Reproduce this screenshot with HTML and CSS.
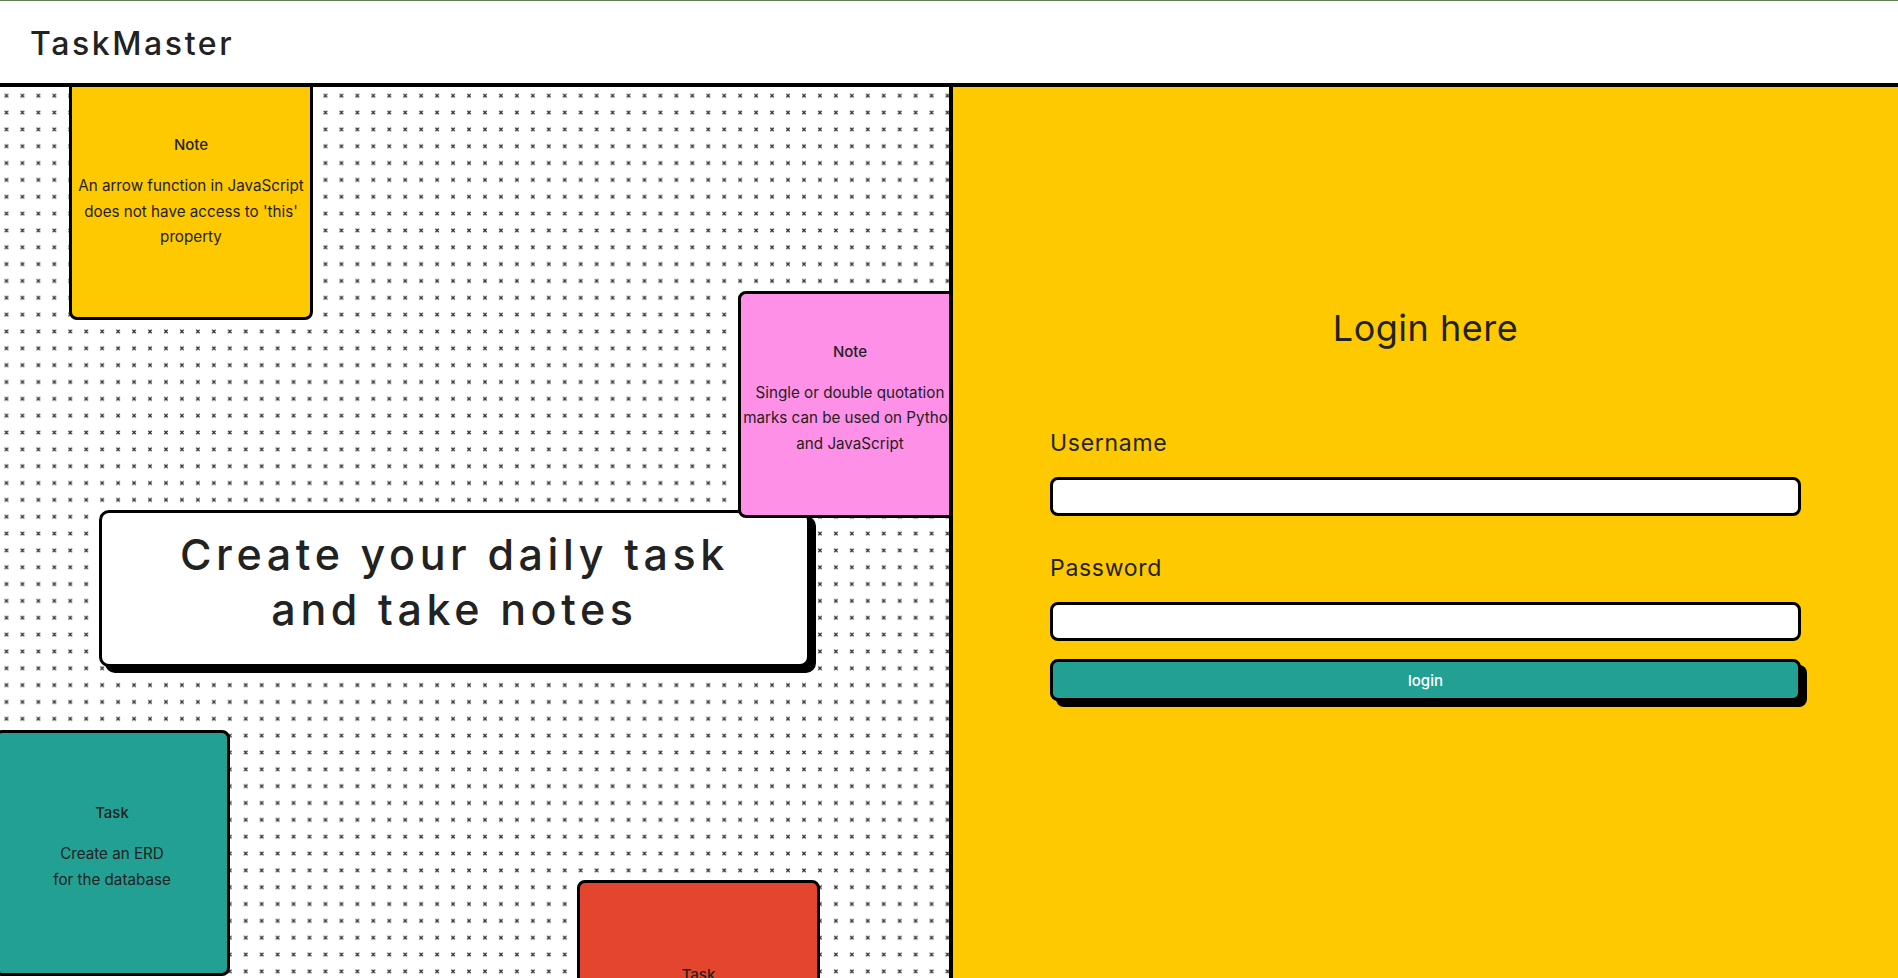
FILE: index.html
```html
<!DOCTYPE html>
<html lang="en">
<head>
<meta charset="utf-8">
<title>TaskMaster</title>
<link rel="stylesheet" href="styles.css">
</head>
<body>
<header class="topbar">
  <h1 class="brand">TaskMaster</h1>
</header>
<main class="layout">
  <section class="board">
    <svg class="dots" aria-hidden="true">
      <defs>
        <pattern id="xmark" width="15.95" height="16.84" patternUnits="userSpaceOnUse" x="-1.5" y="0.3">
          <path d="M6.3 6.75 L9.65 10.1 M9.65 6.75 L6.3 10.1" stroke="#333" stroke-width="1.3" fill="none"/>
        </pattern>
      </defs>
      <rect width="100%" height="100%" fill="url(#xmark)"/>
    </svg>

    <div class="card yellow card-arrow">
      <h3 class="card-title">Note</h3>
      <p class="card-text">An arrow function in JavaScript does not have access to 'this' property</p>
    </div>

    <div class="card teal card-erd">
      <h3 class="card-title">Task</h3>
      <p class="card-text">Create an ERD<br>for the database</p>
    </div>

    <div class="card red card-login">
      <h3 class="card-title">Task</h3>
      <p class="card-text">Build the login page</p>
    </div>

    <div class="hero">
      <h2 class="hero-title">Create your daily task<br>and take notes</h2>
    </div>

    <div class="card pink card-quotes">
      <h3 class="card-title">Note</h3>
      <p class="card-text">Single or double quotation marks can be used on Python and JavaScript</p>
    </div>
  </section>

  <section class="login">
    <h2 class="login-title">Login here</h2>
    <form class="login-form">
      <label class="field-label" for="username">Username</label>
      <input class="field-input" id="username" type="text">
      <label class="field-label second" for="password">Password</label>
      <input class="field-input" id="password" type="password">
      <button class="login-btn" type="button">login</button>
    </form>
  </section>
</main>
</body>
</html>
```

FILE: styles.css
```css
* { box-sizing: border-box; }

html, body {
  margin: 0;
  height: 100%;
}

body {
  font-family: Inter, "Liberation Sans", sans-serif;
  color: #1f1f1f;
  overflow: hidden;
  background: #fff;
}

.topbar {
  height: 87px;
  border-top: 1px solid #5f7f55;
  border-bottom: 4px solid #000;
  display: flex;
  align-items: center;
  padding-left: 30px;
  padding-top: 3px;
  background: #fff;
}

.brand {
  margin: 0;
  font-size: 32px;
  font-weight: 500;
  letter-spacing: 2.6px;
  color: #222;
}

.layout {
  display: grid;
  grid-template-columns: 953px 1fr;
  height: calc(100vh - 87px);
}

.board {
  position: relative;
  overflow: hidden;
  border-right: 4px solid #000;
  background: #fff;
}

.dots {
  position: absolute;
  inset: 0;
  width: 100%;
  height: 100%;
}

.card {
  position: absolute;
  border: 3px solid #000;
  border-radius: 8px;
  display: flex;
  flex-direction: column;
  align-items: center;
  justify-content: center;
  text-align: center;
  padding: 0 0 14px;
  color: #222;
}

.card-title {
  margin: 0 0 16px;
  font-size: 15px;
  line-height: 25px;
  font-weight: 500;
}

.card-text {
  margin: 0;
  font-size: 15.2px;
  line-height: 25.5px;
  font-weight: 400;
}

.yellow { background: #ffc900; }
.pink { background: #ff90e8; }
.teal { background: #23a094; }
.red { background: #e3452f; }

.card-arrow { left: 69px; top: -11px; width: 244px; height: 244px; }
.card-quotes { left: 738px; top: 204px; width: 224px; height: 227px; z-index: 2; }
.card-erd { left: -6px; top: 643px; width: 236px; height: 246px; }
.card-login { left: 577px; top: 793px; width: 243px; height: 244px; }

.hero {
  position: absolute;
  left: 99px;
  top: 423px;
  width: 711px;
  height: 157px;
  background: #fff;
  border: 3px solid #000;
  border-radius: 10px;
  box-shadow: 6px 6px 0 #000;
  display: flex;
  align-items: center;
  justify-content: center;
  padding-bottom: 13px;
  z-index: 1;
}

.hero-title {
  margin: 0;
  font-size: 43px;
  line-height: 55px;
  font-weight: 500;
  letter-spacing: 4.6px;
  text-align: center;
  color: #222;
}

.login {
  background: #ffc900;
  padding-top: 219px;
}

.login-title {
  margin: 0 0 79px;
  text-align: center;
  font-size: 36px;
  line-height: 44px;
  font-weight: 400;
  letter-spacing: 0.5px;
  color: #222;
}

.login-form {
  width: 751px;
  margin: 0 auto;
  display: flex;
  flex-direction: column;
}

.field-label {
  font-size: 23px;
  line-height: 28px;
  font-weight: 400;
  letter-spacing: 0.7px;
  color: #222;
  margin-bottom: 20px;
}

.field-label.second { margin-top: 38px; }

.field-input {
  height: 39px;
  width: 100%;
  border: 3px solid #000;
  border-radius: 8px;
  background: #fff;
  font: inherit;
  padding: 0 10px;
}

.login-btn {
  margin-top: 18px;
  height: 42px;
  width: 100%;
  border: 3px solid #000;
  border-radius: 8px;
  background: #23a094;
  box-shadow: 6px 6px 0 #000;
  color: #fff;
  font-family: inherit;
  font-size: 15px;
  font-weight: 500;
  cursor: pointer;
}
```
